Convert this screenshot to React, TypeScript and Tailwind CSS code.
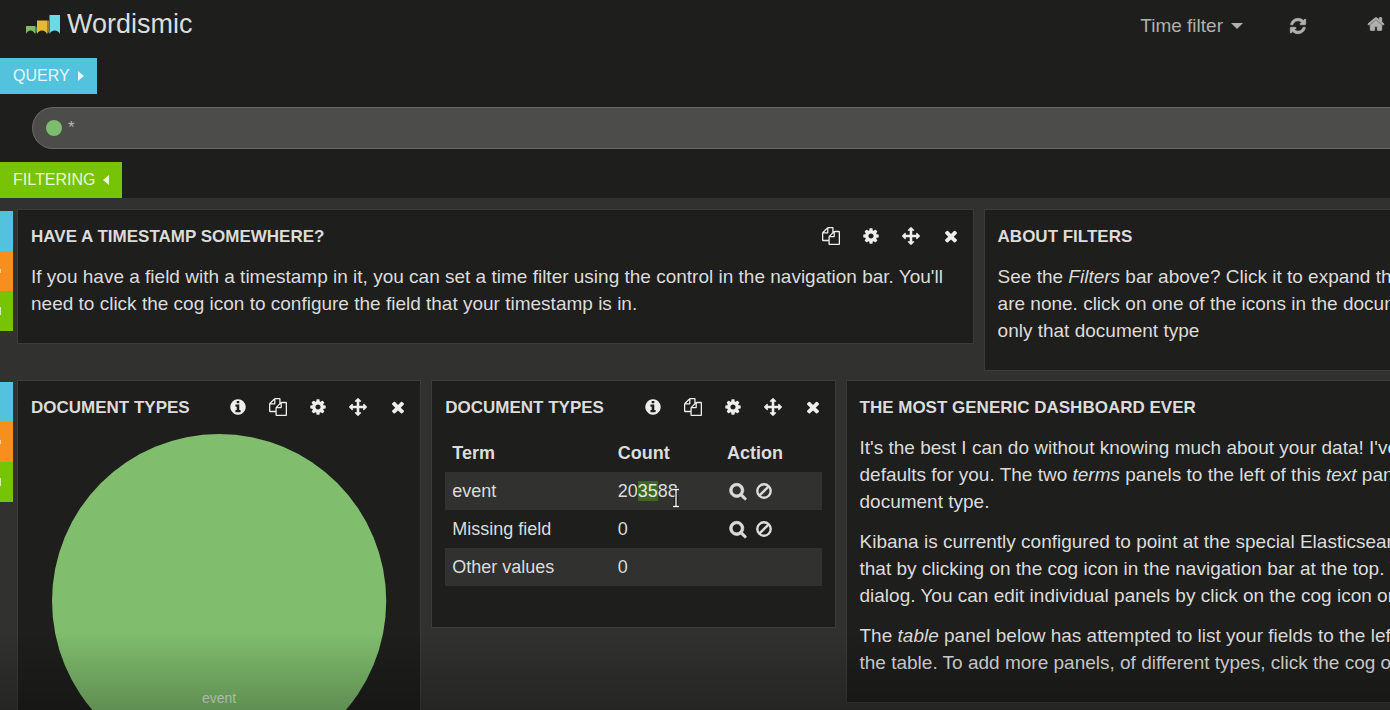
import type { ReactNode } from "react";

const GLYPHS = {
  copy: "M1696 384q40 0 68 28t28 68v1216q0 40-28 68t-68 28h-960q-40 0-68-28t-28-68v-288h-544q-40 0-68-28t-28-68v-672q0-40 20-88t48-76l408-408q28-28 76-48t88-20h416q40 0 68 28t28 68v328q68-40 128-40h416zm-544 213l-299 299h299v-299zm-640-384l-299 299h299v-299zm196 647l316-316v-416h-384v416q0 40-28 68t-68 28h-416v640h512v-256q0-40 20-88t48-76zm956 804v-1152h-384v416q0 40-28 68t-68 28h-416v640h896z",
  cog: "M1152 896q0-106-75-181t-181-75-181 75-75 181 75 181 181 75 181-75 75-181zm512-109v222q0 12-8 23t-20 13l-185 28q-19 54-39 91 35 50 107 138 10 12 10 25t-9 23q-27 37-99 108t-94 71q-12 0-26-9l-138-108q-44 23-91 38-16 136-29 186-7 28-36 28h-222q-14 0-24.5-8.5t-11.5-21.5l-28-184q-49-16-90-37l-141 107q-10 9-25 9-14 0-25-11-126-114-165-168-7-10-7-23 0-12 8-23 15-21 51-66.5t54-70.5q-27-50-41-99l-183-27q-13-2-21-12.5t-8-23.5v-222q0-12 8-23t19-13l186-28q14-46 39-92-40-57-107-138-10-12-10-24 0-10 9-23 26-36 98.5-107.5t94.5-71.5q13 0 26 10l138 107q44-23 91-38 16-136 29-186 7-28 36-28h222q14 0 24.5 8.5t11.5 21.5l28 184q49 16 90 37l142-107q9-9 24-9 13 0 25 10 129 119 165 170 7 8 7 22 0 12-8 23-15 21-51 66.5t-54 70.5q26 50 41 98l183 28q13 2 21 12.5t8 23.5z",
  move: "M1792 896q0 26-19 45l-256 256q-19 19-45 19t-45-19-19-45v-128h-384v384h128q26 0 45 19t19 45-19 45l-256 256q-19 19-45 19t-45-19l-256-256q-19-19-19-45t19-45 45-19h128v-384h-384v128q0 26-19 45t-45 19-45-19l-256-256q-19-19-19-45t19-45l256-256q19-19 45-19t45 19 19 45v128h384v-384h-128q-26 0-45-19t-19-45 19-45l256-256q19-19 45-19t45 19l256 256q19 19 19 45t-19 45-45 19h-128v384h384v-128q0-26 19-45t45-19 45 19l256 256q19 19 19 45z",
  close:
    "M1490 1322q0 40-28 68l-136 136q-28 28-68 28t-68-28l-294-294-294 294q-28 28-68 28t-68-28l-136-136q-28-28-28-68t28-68l294-294-294-294q-28-28-28-68t28-68l136-136q28-28 68-28t68 28l294 294 294-294q28-28 68-28t68 28l136 136q28 28 28 68t-28 68l-294 294 294 294q28 28 28 68z",
  info: "M1152 1376v-160q0-14-9-23t-23-9h-96v-512q0-14-9-23t-23-9h-320q-14 0-23 9t-9 23v160q0 14 9 23t23 9h96v320h-96q-14 0-23 9t-9 23v160q0 14 9 23t23 9h448q14 0 23-9t9-23zm-128-896v-160q0-14-9-23t-23-9h-192q-14 0-23 9t-9 23v160q0 14 9 23t23 9h192q14 0 23-9t9-23zm640 416q0 209-103 385.5t-279.5 279.5-385.5 103-385.5-103-279.5-279.5-103-385.5 103-385.5 279.5-279.5 385.5-103 385.5 103 279.5 279.5 103 385.5z",
  search:
    "M1216 832q0-185-131.5-316.5t-316.5-131.5-316.5 131.5-131.5 316.5 131.5 316.5 316.5 131.5 316.5-131.5 131.5-316.5zm512 832q0 52-38 90t-90 38q-54 0-90-38l-343-342q-179 124-399 124-143 0-273.5-55.5t-225-150-150-225-55.5-273.5 55.5-273.5 150-225 225-150 273.5-55.5 273.5 55.5 225 150 150 225 55.5 273.5q0 220-124 399l343 343q37 37 37 90z",
  refresh:
    "M1639 1056q0 5-1 7-64 268-268 434.5t-478 166.5q-146 0-282.5-55t-243.500-157l-129 129q-19 19-45 19t-45-19-19-45v-448q0-26 19-45t45-19h448q26 0 45 19t19 45-19 45l-137 137q71 66 161 102t187 36q134 0 250-65t186-179q11-17 53-117 8-23 30-23h192q13 0 22.5 9.5t9.500 22.500zm25-800v448q0 26-19 45t-45 19h-448q-26 0-45-19t-19-45 19-45l138-138q-148-137-349-137-134 0-250 65t-186 179q-11 17-53 117-8 23-30 23h-199q-13 0-22.5-9.5t-9.5-22.500v-7q65-268 270-434.500t480-166.500q146 0 284 55.500t245 156.500l130-129q19-19 45-19t45 19 19 45z",
  home: "M1472 992v480q0 26-19 45t-45 19h-384v-384h-256v384h-384q-26 0-45-19t-19-45v-480q0-1 .5-3t.5-3l575-474 575 474q1 2 1 6zm223-69l-62 74q-8 9-21 11h-3q-13 0-21-7l-692-577-692 577q-12 8-24 7-13-2-21-11l-62-74q-8-10-7-23.500t11-21.500l719-599q32-26 76-26t76 26l244 204v-195q0-14 9-23t23-9h192q14 0 23 9t9 23v408l219 182q10 8 11 21.500t-7 23.500z",
};

type GlyphName = keyof typeof GLYPHS;

function Glyph({ name, bold = false }: { name: GlyphName; bold?: boolean }) {
  return (
    <svg
      viewBox="0 0 1792 1792"
      className="block size-[18px] overflow-visible fill-current"
      stroke={bold ? "currentColor" : "none"}
      strokeWidth="70"
      aria-hidden="true"
    >
      <path d={GLYPHS[name]} />
    </svg>
  );
}

function BanIcon() {
  return (
    <svg viewBox="0 0 18 18" className="block size-[18px]" fill="none" stroke="currentColor" strokeWidth="2.4" aria-hidden="true">
      <circle cx="9" cy="9" r="6.700" />
      <path d="M4.300 13.700 13.700 4.300" />
    </svg>
  );
}

function Logo() {
  return (
    <svg viewBox="0 0 34 20" className="h-5 w-[34px]" aria-hidden="true">
      <path fill="#7dbb68" d="M0 12h9v8q-1.500-3.500-4.500-3.500T0 20z" />
      <path fill="#4d7a4a" d="M9 12l2 1v5l-2 2z" />
      <path fill="#e6b935" d="M11 6.500h10V20q-1.500-3.500-5-3.500T11 20z" />
      <path fill="#9a7a35" d="M21 6.500h2V18l-2 2z" />
      <path fill="#6adbe2" d="M23.500 1H34v19q-1.500-3.500-5.200-3.500T23.500 20z" />
    </svg>
  );
}

const ACTION_LABELS: Record<string, string> = {
  info: "Inspect",
  copy: "Duplicate",
  cog: "Configure",
  move: "Move",
  close: "Remove",
};

function Panel({
  title,
  actions = [],
  className,
  children,
}: {
  title: string;
  actions?: GlyphName[];
  className: string;
  children: ReactNode;
}) {
  return (
    <section className={`overflow-hidden border border-[#3b3b3a] bg-[#1e1e1d] p-[13px] ${className}`}>
      <header className="mb-[13px] flex h-[27px] items-start justify-between">
        <h2 className="text-[17px] leading-[27px] font-bold whitespace-nowrap uppercase">{title}</h2>
        <div className="flex gap-[22px] pt-1 text-[#eeeeec]">
          {actions.map((a) => (
            <button key={a} type="button" aria-label={ACTION_LABELS[a]}>
              <Glyph name={a} />
            </button>
          ))}
        </div>
      </header>
      {children}
    </section>
  );
}

function Row({ children }: { children: ReactNode }) {
  return (
    <div className="flex items-start gap-1">
      <div className="mt-0.5 w-[13px] shrink-0 overflow-hidden">
        <button type="button" aria-label="Collapse row" className="block h-10 w-full bg-[#52c2dd]" />
        <button type="button" aria-label="Configure row" className="flex h-10 w-full items-center bg-[#f78f1e]">
          <span className="h-1 w-px bg-[#fbd2a5]" />
        </button>
        <button type="button" aria-label="Add panel" className="flex h-10 w-full items-center bg-[#76c405]">
          <span className="h-2 w-px bg-[#d5efb0]" />
        </button>
      </div>
      <div className="grid grow grid-cols-12 items-start gap-[10px]">{children}</div>
    </div>
  );
}

function Prose({ children }: { children: ReactNode }) {
  return <p className="mb-[13px] text-[19px] leading-[27px] whitespace-nowrap">{children}</p>;
}

const terms: { term: string; count: ReactNode; filterable: boolean }[] = [
  {
    term: "event",
    count: (
      <>
        20<mark className="bg-[#40661f] text-[#e4eadf]">35</mark>88
      </>
    ),
    filterable: true,
  },
  { term: "Missing field", count: "0", filterable: true },
  { term: "Other values", count: "0", filterable: false },
];

function TermsTable() {
  return (
    <table className="mb-7 w-full text-left text-[18px]">
      <thead>
        <tr className="h-[38px]">
          <th className="w-[44%] px-[7px] font-bold">Term</th>
          <th className="w-[29%] px-[7px] font-bold">Count</th>
          <th className="px-[7px] font-bold">Action</th>
        </tr>
      </thead>
      <tbody>
        {terms.map((t) => (
          <tr key={t.term} className="h-[38px] odd:bg-[#31312f]">
            <td className="px-[7px]">{t.term}</td>
            <td className="relative px-[7px]">
              {t.count}
              {t.term === "event" && (
                <svg viewBox="0 0 8 20" className="absolute top-4 left-[61px] h-5 w-2" fill="none" aria-hidden="true">
                  <path d="M1 1.500h6M4 1.500v17M1 18.500h6" stroke="#111" strokeWidth="3" />
                  <path d="M1 1.500h6M4 1.500v17M1 18.500h6" stroke="#fff" strokeWidth="1.300" />
                </svg>
              )}
            </td>
            <td className="px-[7px]">
              {t.filterable && (
                <div className="flex gap-2 pl-0.5">
                  <button type="button" aria-label={`Show only ${t.term}`}>
                    <Glyph name="search" bold />
                  </button>
                  <button type="button" aria-label={`Exclude ${t.term}`}>
                    <BanIcon />
                  </button>
                </div>
              )}
            </td>
          </tr>
        ))}
      </tbody>
    </table>
  );
}

export default function App() {
  return (
    <div className="relative h-screen overflow-hidden bg-[#31312f] font-['Liberation_Sans',Arial,sans-serif] text-[#dcdcda]">
      <div className="bg-[#1e1e1d]">
        <header className="flex h-[58px] items-start justify-between pr-[5px] pl-[26px]">
          <a href="#home" className="flex items-center gap-[7px] pt-2">
            <Logo />
            <span className="text-[27px] leading-8">Wordismic</span>
          </a>
          <nav className="flex items-center pt-3 text-[#b0b0ae]">
            <button type="button" className="flex items-center gap-2 text-[19px] leading-7">
              Time filter
              <svg viewBox="0 0 12 6" className="h-1.5 w-3 fill-current" aria-hidden="true">
                <path d="M0 0h12L6 6z" />
              </svg>
            </button>
            <button type="button" aria-label="Refresh" className="ml-[46px]">
              <Glyph name="refresh" bold />
            </button>
            <a href="#home" aria-label="Home" className="ml-[60px] pb-1">
              <Glyph name="home" bold />
            </a>
          </nav>
        </header>

        <button type="button" className="flex h-9 items-center gap-2 bg-[#52c2dd] px-[13px] text-[16px] text-[#e6f8fc]">
          QUERY
          <svg viewBox="0 0 6 10" className="h-2.5 w-1.5 fill-current" aria-hidden="true">
            <path d="M0 0v10l6-5z" />
          </svg>
        </button>

        <div className="py-[13px] pl-8">
          <label className="flex h-[42px] items-center gap-1.5 rounded-l-full border border-r-0 border-[#67696a] bg-[#4c4c4b] pl-[13px]">
            <span className="size-4 rounded-full bg-[#7ebd6d]" />
            <input
              type="text"
              aria-label="Query"
              defaultValue="*"
              className="h-full grow bg-transparent text-[17px] text-[#b4b4b2] outline-none"
            />
          </label>
        </div>

        <button type="button" className="flex h-9 items-center gap-2 bg-[#76c405] px-[13px] text-[16px] text-[#ecf8d8]">
          FILTERING
          <svg viewBox="0 0 6 10" className="h-2.5 w-1.5 fill-current" aria-hidden="true">
            <path d="M6 0v10L0 5z" />
          </svg>
        </button>
      </div>

      <main className="flex w-[120%] flex-col gap-[9px] pt-[11px] pr-1">
        <Row>
          <Panel title="Have a timestamp somewhere?" actions={["copy", "cog", "move", "close"]} className="col-span-7">
            <Prose>
              If you have a field with a timestamp in it, you can set a time filter using the control in the navigation bar. You'll
              <br />
              need to click the cog icon to configure the field that your timestamp is in.
            </Prose>
          </Panel>
          <Panel title="About filters" className="col-span-5">
            <Prose>
              See the <em>Filters</em> bar above? Click it to expand the
              <br />
              are none. click on one of the icons in the document
              <br />
              only that document type
            </Prose>
          </Panel>
        </Row>

        <Row>
          <Panel title="Document types" actions={["info", "copy", "cog", "move", "close"]} className="col-span-3">
            <svg viewBox="0 0 376 334" className="block w-full" role="img" aria-label="event">
              <circle cx="188" cy="167" r="167" fill="#80be6e" />
              <text x="188" y="269" textAnchor="middle" fontSize="14" fill="#d9ead5">
                event
              </text>
            </svg>
          </Panel>
          <Panel title="Document types" actions={["info", "copy", "cog", "move", "close"]} className="col-span-3">
            <TermsTable />
          </Panel>
          <Panel title="The most generic dashboard ever" className="col-span-6">
            <Prose>
              It's the best I can do without knowing much about your data! I've
              <br />
              defaults for you. The two <em>terms</em> panels to the left of this <em>text</em> panel
              <br />
              document type.
            </Prose>
            <Prose>
              Kibana is currently configured to point at the special Elasticsearch
              <br />
              that by clicking on the cog icon in the navigation bar at the top. You
              <br />
              dialog. You can edit individual panels by click on the cog icon on
            </Prose>
            <Prose>
              The <em>table</em> panel below has attempted to list your fields to the left,
              <br />
              the table. To add more panels, of different types, click the cog on
            </Prose>
          </Panel>
        </Row>
      </main>

      <div className="pointer-events-none absolute inset-x-0 bottom-0 h-20 bg-linear-to-t from-black/25 to-transparent" />
    </div>
  );
}
